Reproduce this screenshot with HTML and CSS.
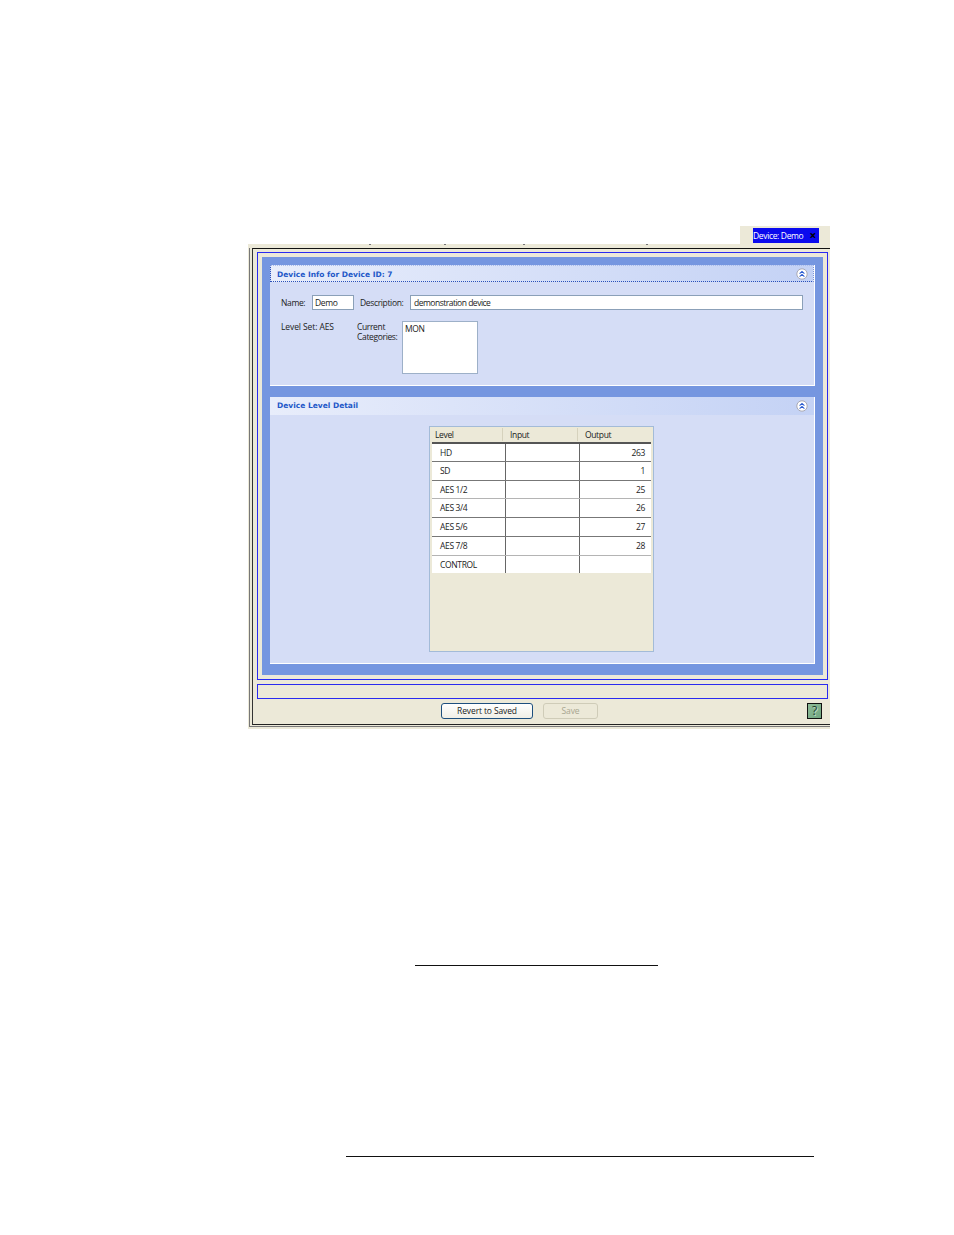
FILE: index.html
```html
<!DOCTYPE html>
<html lang="en">
<head>
<meta charset="utf-8">
<title>Device Info</title>
<link rel="stylesheet" href="styles.css">
</head>
<body>
<div class="window">
  <div class="tabrow">
    <div class="tab"><div class="tab-label"><span>Device: Demo</span><span class="tab-x">×</span></div></div>
  </div>
  <div class="tickstrip"><i class="tick t1"></i><i class="tick t2"></i><i class="tick t3"></i><i class="tick t4"></i></div>
  <div class="frame">
    <div class="frame-mid">
      <div class="frame-in">
        <div class="blue-box">
          <div class="main">
            <section class="panel panel-info">
              <header class="panel-head focused">
                <h2>Device Info for Device ID: 7</h2>
                <svg class="chev" viewBox="0 0 12 12" width="12" height="12"><circle cx="6" cy="6" r="5.2" fill="#fff" stroke="#a9a9b4"/><path d="M3.6 5.6 6 3.4l2.4 2.2M3.6 8.6 6 6.4l2.4 2.2" fill="none" stroke="#2a5bd0" stroke-width="1.1"/></svg>
              </header>
              <div class="form-row">
                <label class="lbl-name">Name:</label>
                <div class="field f-name">Demo</div>
                <label class="lbl-desc">Description:</label>
                <div class="field f-desc">demonstration device</div>
              </div>
              <div class="form-row2">
                <div class="levelset">Level Set: AES</div>
                <div class="catlabel">Current<br>Categories:</div>
                <div class="catlist">MON</div>
              </div>
            </section>
            <section class="panel panel-detail">
              <header class="panel-head">
                <h2>Device Level Detail</h2>
                <svg class="chev" viewBox="0 0 12 12" width="12" height="12"><circle cx="6" cy="6" r="5.2" fill="#fff" stroke="#a9a9b4"/><path d="M3.6 5.6 6 3.4l2.4 2.2M3.6 8.6 6 6.4l2.4 2.2" fill="none" stroke="#2a5bd0" stroke-width="1.1"/></svg>
              </header>
              <div class="table">
                <div class="thead"><div>Level</div><div>Input</div><div>Output</div></div>
                <div class="row h19 dark"><div>HD</div><div></div><div class="num">263</div></div>
                <div class="row h19 dark"><div>SD</div><div></div><div class="num">1</div></div>
                <div class="row h18 light"><div>AES 1/2</div><div></div><div class="num">25</div></div>
                <div class="row h19 dark"><div>AES 3/4</div><div></div><div class="num">26</div></div>
                <div class="row h19 dark"><div>AES 5/6</div><div></div><div class="num">27</div></div>
                <div class="row h19 light"><div>AES 7/8</div><div></div><div class="num">28</div></div>
                <div class="row h17"><div>CONTROL</div><div></div><div class="num"></div></div>
              </div>
            </section>
          </div>
        </div>
        <div class="status"></div>
        <div class="footer">
          <button class="btn btn-main" type="button">Revert to Saved</button>
          <button class="btn btn-off" type="button" disabled>Save</button>
          <div class="help">?</div>
        </div>
      </div>
    </div>
  </div>
</div>
<div class="rule rule-a"></div>
<div class="rule rule-b"></div>
</body>
</html>
```
FILE: styles.css
```css
* { box-sizing: border-box; }
html, body { margin: 0; padding: 0; background: #fff; }
body {
  width: 954px;
  height: 1235px;
  overflow: hidden;
  padding-top: 226px;
  font-family: "Open Sans", "Liberation Sans", sans-serif;
  font-size: 8.5px;
  letter-spacing: -0.35px;
  color: #222;
}
.window { margin-left: 248px; width: 582px; }
.tabrow { height: 18px; display: flex; justify-content: flex-end; }
.tab { width: 90px; height: 18px; background: #ece9d8; padding: 2px 11px 0 13px; }
.tab-label {
  height: 15px;
  background: #0a0aee;
  color: #fff;
  display: flex;
  justify-content: space-between;
  align-items: center;
  padding-right: 3px;
  white-space: nowrap;
}
.tab-x { color: #000; font-weight: 700; font-size: 12px; line-height: 12px; }
.tickstrip { height: 4px; background: #ece9d8; display: flex; }
.tick { display: block; width: 2px; height: 1px; background: #777; }
.t1 { margin-left: 121px; }
.t2 { margin-left: 73px; }
.t3 { margin-left: 77px; }
.t4 { margin-left: 121px; }
.frame { background: #ece9d8; height: 481px; padding: 0 0 2px 1px; }
.frame-mid { height: 100%; border-left: 1px solid #777; border-bottom: 1px solid #777; padding: 0 0 1px 2px; }
.frame-in {
  height: 100%;
  border-left: 1px solid #333;
  border-top: 1px solid #111;
  border-bottom: 1px solid #222;
  padding: 3px 2px 0 4px;
}
.blue-box { height: 428px; border: 1px solid #2a2af0; padding: 4px; }
.main { height: 418px; background: #7596e0; padding: 8px 8px 11px; display: flex; flex-direction: column; gap: 11px; }
.panel { background: #d5ddf6; border-right: 1px solid #fff; border-bottom: 1px solid #fff; }
.panel-info { height: 121px; }
.panel-detail { height: 267px; }
.panel-head {
  display: flex;
  justify-content: space-between;
  align-items: center;
  padding: 0 6px 1px 7px;
  background: linear-gradient(90deg, #e8edfb, #c4d2f5);
  height: 18px;
}
.panel-head.focused {
  height: 17px;
  border-bottom: 1px dotted #2a50b8;
  border-left: 1px dotted #2a50b8;
  border-right: 1px dotted #7b94d8;
  border-top: 1px dotted #a9bbea;
  padding: 0 5px 0 6px;
}
.panel-head h2 { margin: 0; font-family: "DejaVu Sans", sans-serif; font-size: 7.5px; letter-spacing: 0; font-weight: 700; color: #2358c8; white-space: nowrap; }
.panel-head.focused h2 { margin-top: 1px; }
.form-row { display: flex; align-items: center; height: 15px; margin-top: 13px; padding-left: 11px; }
.lbl-name { width: 31px; }
.field { background: #fff; border: 1px solid #8ba0b8; height: 15px; line-height: 13px; padding-left: 2px; white-space: nowrap; }
.f-name { width: 42px; }
.lbl-desc { margin-left: 6px; width: 50px; white-space: nowrap; }
.f-desc { width: 393px; padding-left: 3px; letter-spacing: -0.5px; }
.form-row2 { display: flex; margin-top: 11px; padding-left: 11px; align-items: flex-start; }
.levelset { width: 76px; line-height: 11px; letter-spacing: -0.1px; white-space: nowrap; }
.catlabel { width: 45px; line-height: 10px; margin-top: 1px; white-space: nowrap; }
.catlist { width: 76px; height: 53px; background: #fff; border: 1px solid #9db0c8; padding: 1px 2px; line-height: 11px; }
.table {
  width: 225px;
  height: 226px;
  margin: 11px 0 0 159px;
  background: #ece9d8;
  border: 1px solid #a3bbd8;
}
.thead { display: grid; grid-template-columns: 73px 75px 1fr; height: 15px; }
.thead div { padding-left: 5px; border-right: 1px solid #d6d2bd; height: 13px; margin-top: 1px; line-height: 14px; }
.thead div:nth-child(2) { padding-left: 7px; }
.thead div:nth-child(3) { padding-left: 7px; border-right: 0; }
.row { display: grid; grid-template-columns: 74px 74px 71px; margin: 0 2px; background: #fff; }
.thead + .row { border-top: 2px solid #555; height: 20px; }
.row div { border-right: 1px solid #666; padding: 0 0 1px 8px; display: flex; align-items: center; }
.row div:last-child { border-right: 0; }
.row .num { justify-content: flex-end; padding: 0 6px 1px 0; }
.h19 { height: 19px; }
.h18 { height: 18px; }
.h17 { height: 17px; }
.dark { border-bottom: 1px solid #777; }
.light { border-bottom: 1px solid #b4b4b4; }
.status { height: 15px; margin-top: 4px; border: 1px solid #2a2af0; }
.footer { display: flex; margin-top: 4px; height: 16px; padding-left: 184px; padding-right: 6px; }
.btn { font: inherit; letter-spacing: -0.13px; height: 16px; padding: 0 0 2px; border-radius: 3px; background: linear-gradient(#fff, #f0efe6); }
.btn-main { width: 92px; border: 1px solid #1d4f7e; color: #222; }
.btn-off { width: 55px; margin-left: 10px; border: 1px solid #cfccb8; color: #a8a690; background: #ece9d8; }
.help {
  margin-left: auto;
  width: 15px;
  height: 16px;
  border: 1px solid #111;
  background: linear-gradient(135deg, #8fbc98, #6fa580);
  color: #1c3a28;
  font-size: 12px;
  line-height: 14px;
  text-align: center;
  text-shadow: 1px 1px 0 #c4dcc9;
}
.rule { height: 1px; background: #111; }
.rule-a { margin: 236px 0 0 415px; width: 243px; }
.rule-b { margin: 190px 0 0 346px; width: 468px; }
```
